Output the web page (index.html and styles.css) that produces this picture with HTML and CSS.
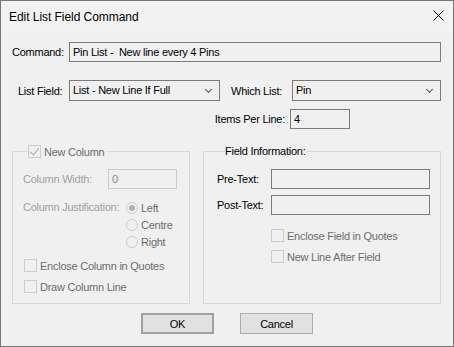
FILE: index.html
```html
<!DOCTYPE html>
<html lang="en">
<head>
  <meta charset="UTF-8" />
  <title>Edit List Field Command</title>
  <link rel="stylesheet" href="styles.css">
</head>
<body>
  <div class="window">
    <div class="titlebar">
      <span class="title">Edit List Field Command</span>
      <svg class="close" width="11" height="11" viewBox="0 0 11 11"><path d="M0.5 0.5 L10.5 10.5 M10.5 0.5 L0.5 10.5" stroke="#000" stroke-width="1" fill="none"/></svg>
    </div>
    <div class="content">
      <div class="row row-command">
        <label class="lbl lbl-command">Command:</label>
        <div class="box box-wide">Pin List -&nbsp; New line every 4 Pins</div>
      </div>

      <div class="row row-list">
        <label class="lbl lbl-listfield">List Field:</label>
        <div class="select select-field">List - New Line If Full<span class="chev"></span></div>
        <label class="lbl lbl-which">Which List:</label>
        <div class="select select-which">Pin<span class="chev"></span></div>
      </div>

      <div class="row row-items">
        <label class="lbl">Items Per Line:</label>
        <div class="box box-items">4</div>
      </div>

      <div class="groups">
        <fieldset class="group group-column">
          <legend class="legend-check"><span class="check checked disabled"></span><span class="dis">New Column</span></legend>
          <div class="g-row cw-row">
            <span class="lbl faint cw-label">Column Width:</span>
            <div class="box box-cw disabled-box">0</div>
          </div>
          <div class="just-row">
            <span class="lbl faint just-label">Column Justification:</span>
            <div class="radios">
              <div class="radio-row"><span class="radio on"></span><span class="dis">Left</span></div>
              <div class="radio-row"><span class="radio"></span><span class="dis">Centre</span></div>
              <div class="radio-row"><span class="radio"></span><span class="dis">Right</span></div>
            </div>
          </div>
          <div class="check-row first"><span class="check disabled"></span><span class="dis">Enclose Column in Quotes</span></div>
          <div class="check-row"><span class="check disabled"></span><span class="dis">Draw Column Line</span></div>
        </fieldset>

        <fieldset class="group group-field">
          <legend class="legend-text">Field Information:</legend>
          <div class="g-row text-row first">
            <span class="lbl text-label">Pre-Text:</span>
            <div class="box box-text"></div>
          </div>
          <div class="g-row text-row">
            <span class="lbl text-label">Post-Text:</span>
            <div class="box box-text"></div>
          </div>
          <div class="check-row indent first"><span class="check disabled"></span><span class="dis">Enclose Field in Quotes</span></div>
          <div class="check-row indent"><span class="check disabled"></span><span class="dis">New Line After Field</span></div>
        </fieldset>
      </div>

      <div class="buttons">
        <button class="btn btn-default">OK</button>
        <button class="btn">Cancel</button>
      </div>
    </div>
  </div>
</body>
</html>
```

FILE: styles.css
```css
* { box-sizing: border-box; }
html, body {
  margin: 0;
  padding: 0;
  background: #f0f0f0;
}
body {
  font-family: "Liberation Sans", Arial, sans-serif;
  font-size: 11px;
  letter-spacing: -0.25px;
  color: #000;
}
.window {
  width: 454px;
  height: 347px;
  border: 1px solid #777;
  background: #f0f0f0;
}
.titlebar {
  height: 30px;
  display: flex;
  align-items: center;
  justify-content: space-between;
  padding: 0 9px 0 8px;
  background: #f2f2f2;
}
.title {
  font-family: "Liberation Sans", Arial, sans-serif;
  font-size: 12px;
  letter-spacing: -0.05px;
  color: #000;
  margin-top: 1px;
}
.close { margin-top: -1px; }
.content {
  padding: 0 12px 0 11px;
}
.row {
  display: flex;
  align-items: center;
}
.lbl { white-space: nowrap; }
.box {
  height: 20px;
  border: 1px solid #7a7a7a;
  background: #f0f0f0;
  padding: 0 3px;
  line-height: 18px;
  white-space: nowrap;
}
.row-command { margin-top: 11px; }
.lbl-command { width: 57px; }
.box-wide { flex: 1; }

.row-list { margin-top: 18px; padding-left: 6px; }
.lbl-listfield { width: 51px; }
.lbl-which { width: 61px; margin-left: 11px; }
.select {
  position: relative;
  height: 21px;
  border: 1px solid #7a7a7a;
  background: #f0f0f0;
  padding: 0 3px;
  line-height: 19px;
}
.select-field { width: 151px; }
.select-which { flex: 1; }
.chev {
  position: absolute;
  right: 8px;
  top: 6px;
  width: 5px;
  height: 5px;
  border-right: 1px solid #555;
  border-bottom: 1px solid #555;
  transform: rotate(45deg);
}

.row-items {
  margin-top: 8px;
  justify-content: flex-end;
  padding-right: 91px;
}
.row-items .lbl { margin-right: 5px; }
.box-items { width: 60px; }

.groups {
  display: flex;
  margin-top: 16px;
  gap: 13px;
}
.group {
  margin: 0;
  padding: 0;
  border: 1px solid #d8d8d8;
  height: 159px;
  min-width: 0;
}
.group-column { width: 178px; padding-left: 10px; }
.group-field { width: 238px; padding-left: 13px; }
.legend-check {
  margin-left: 5px;
  padding: 0 3px 0 0;
  display: flex;
  align-items: center;
  height: 13px;
}
.legend-check .check { margin-right: 3px; }
.legend-text {
  margin-left: 8px;
  padding: 0 2px 0 0;
  height: 13px;
  line-height: 13px;
}
.dis { color: #6d6d6d; }
.faint { color: #a0a0a0; }

.g-row { display: flex; align-items: center; }
.cw-row { margin-top: 11px; }
.cw-label { width: 85px; }
.box-cw { width: 69px; }
.disabled-box { border-color: #cccccc; color: #8a8a8a; }

.just-row {
  display: flex;
  margin-top: 10px;
}
.just-label { width: 103px; line-height: 17px; }
.radio-row {
  display: flex;
  align-items: center;
  height: 17px;
}
.radio {
  width: 12px;
  height: 12px;
  border: 1px solid #cccccc;
  border-radius: 50%;
  background: #f0f0f0;
  margin-right: 3px;
  position: relative;
}
.radio.on::after {
  content: "";
  position: absolute;
  left: 2px;
  top: 2px;
  width: 6px;
  height: 6px;
  border-radius: 50%;
  background: #b0b0b0;
}

.check {
  display: inline-block;
  width: 13px;
  height: 13px;
  border: 1px solid #cccccc;
  background: #f0f0f0;
  position: relative;
  flex: none;
}
.check.checked::after {
  content: "";
  position: absolute;
  left: 3px;
  top: 0px;
  width: 4px;
  height: 8px;
  border-right: 1px solid #a8a8a8;
  border-bottom: 1px solid #a8a8a8;
  transform: rotate(40deg);
}
.check-row {
  display: flex;
  align-items: center;
  height: 13px;
  margin-top: 8px;
  padding-left: 1px;
}
.check-row .check { margin-right: 3px; }
.group-column .check-row.first { margin-top: 9px; }

.text-row.first { margin-top: 11px; }
.text-row { margin-top: 6px; }
.text-label { width: 54px; }
.box-text { width: 159px; }
.check-row.indent { padding-left: 54px; }
.group-field .check-row.first { margin-top: 14px; }

.buttons {
  display: flex;
  justify-content: center;
  gap: 26px;
  margin-top: 9px;
  padding-left: 1px;
}
.btn {
  width: 73px;
  height: 21px;
  border: 1px solid #adadad;
  background: #e1e1e1;
  font-family: inherit;
  font-size: 11px;
  letter-spacing: -0.25px;
  color: #000;
  padding: 0;
}
.btn-default { border: 2px solid #a0a0a0; }
```
